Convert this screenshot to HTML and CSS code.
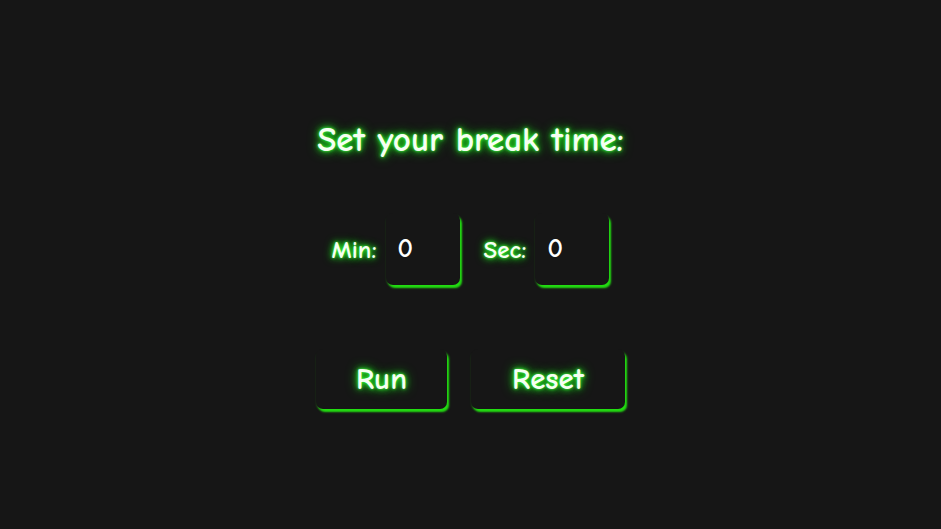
FILE: index.html
```html
<!DOCTYPE html>
<html>
<head>
<meta charset="utf-8">
<link rel="stylesheet" href="styles.css">
</head>
<body>
<main class="app">
  <h1 class="title">Set your break time:</h1>
  <div class="fields">
    <label class="field"><span class="label">Min:</span><input class="num" type="text" value="0"></label>
    <label class="field"><span class="label">Sec:</span><input class="num" type="text" value="0"></label>
  </div>
  <div class="actions">
    <button class="btn btn-run">Run</button>
    <button class="btn btn-reset">Reset</button>
  </div>
</main>
</body>
</html>
```
FILE: styles.css
```css
html, body {
  margin: 0;
  padding: 0;
  background: #161616;
  height: 100%;
}
body {
  font-family: "Comic Sans MS", "Comic Neue", cursive;
  font-weight: bold;
}
.app {
  display: flex;
  flex-direction: column;
  align-items: center;
  padding-top: 117px;
}
.title {
  margin: 0;
  font-size: 35px;
  font-weight: bold;
  color: #f6fff2;
  text-shadow: 0 0 3px #4f4, 0 0 6px #2e2, 0 0 12px #1c1;
  line-height: 46px;
}
.fields {
  display: flex;
  gap: 24px;
  margin-top: 50px;
}
.field {
  display: flex;
  align-items: center;
  gap: 9px;
}
.label {
  font-size: 25px;
  color: #f6fff2;
  text-shadow: 0 0 3px #4f4, 0 0 6px #2e2, 0 0 10px #1c1;
}
.num {
  width: 74px;
  height: 72px;
  box-sizing: border-box;
  border: none;
  border-radius: 7px;
  background: #161616;
  color: #fff;
  font-family: inherit;
  font-weight: bold;
  font-size: 27px;
  padding: 0 0 2px 12px;
  outline: none;
  box-shadow: 2px 3px 2px #22dd11, -1px 2px 2px -1px rgba(40,160,20,0.3);
}
.actions {
  display: flex;
  gap: 24px;
  margin-top: 64px;
}
.btn {
  height: 60px;
  box-sizing: border-box;
  border: none;
  border-radius: 7px;
  background: #161616;
  color: #f6fff2;
  font-family: inherit;
  font-weight: bold;
  font-size: 31px;
  text-shadow: 0 0 3px #4f4, 0 0 6px #2e2, 0 0 12px #1c1;
  box-shadow: 2px 3px 2px #22dd11, -1px 2px 2px -1px rgba(40,160,20,0.3);
  cursor: pointer;
  padding: 0;
}
.btn-run { width: 131px; }
.btn-reset { width: 154px; }
```
